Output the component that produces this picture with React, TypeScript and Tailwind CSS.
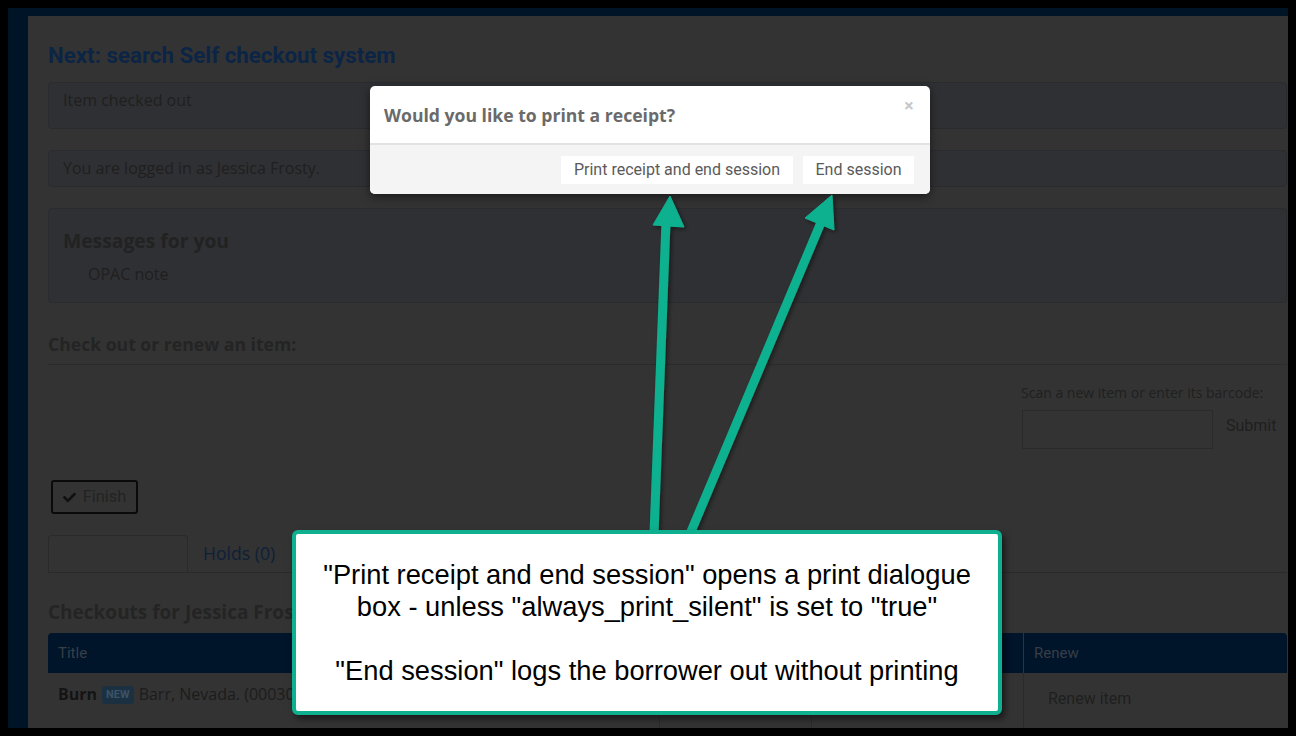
import { FaCheck } from "react-icons/fa";

const openSans = { fontFamily: '"Open Sans", "Noto Sans", sans-serif' };
const roboto = { fontFamily: 'Roboto, "Liberation Sans", sans-serif' };
const arial = { fontFamily: '"Liberation Sans", Arial, sans-serif' };

function Alert({ children, className }: { children: React.ReactNode; className?: string }) {
  return (
    <div className={`rounded-[4px] border border-[#292b2e] bg-[#2f3033] px-[14px] ${className ?? ""}`}>
      {children}
    </div>
  );
}

function ReceiptModal() {
  return (
    <div className="absolute left-[370px] top-[86px] w-[560px] overflow-hidden rounded-[5px] bg-white shadow-[0_3px_10px_rgba(0,0,0,0.5)]">
      <div className="relative flex h-[59px] items-center border-b-2 border-[#e2e2e2] px-[14px]" style={openSans}>
        <span className="mt-[2px] text-[17.6px] font-bold text-[#6a6a6a]">Would you like to print a receipt?</span>
        <span className="absolute right-[16px] top-[10px] text-[18px] font-bold leading-none text-[#c6c6c6]">×</span>
      </div>
      <div className="flex h-[49px] items-center justify-end gap-[10px] bg-[#f4f4f4] pr-[16px]" style={roboto}>
        <span className="flex h-[28px] w-[232px] items-center justify-center bg-white text-[16px] text-[#5a5a5a]">
          Print receipt and end session
        </span>
        <span className="flex h-[28px] w-[111px] items-center justify-center bg-white text-[16px] text-[#5a5a5a]">
          End session
        </span>
      </div>
    </div>
  );
}

function Arrows() {
  return (
    <svg className="absolute inset-0" width="1296" height="736" viewBox="0 0 1296 736">
      <defs>
        <filter id="sh" x="-50%" y="-10%" width="200%" height="120%">
          <feDropShadow dx="2" dy="2" stdDeviation="2" floodColor="#000" floodOpacity="0.45" />
        </filter>
      </defs>
      <g filter="url(#sh)" fill="#0fb08f" stroke="#0fb08f">
        <line x1="654" y1="534" x2="666" y2="222" strokeWidth="9" />
        <polygon points="670,196 653,225 684,227" strokeWidth="1" />
        <line x1="690" y1="534" x2="822" y2="220" strokeWidth="9" />
        <polygon points="832,195 805,218 834,230" strokeWidth="1" />
      </g>
    </svg>
  );
}

function Callout() {
  return (
    <div
      className="absolute left-[292px] top-[530px] flex h-[185px] w-[710px] flex-col items-center justify-center rounded-[6px] border-4 border-[#0fb08f] bg-white text-center text-[27.3px] leading-[32px] text-black shadow-[3px_4px_6px_rgba(0,0,0,0.5)]"
      style={arial}
    >
      <p className="whitespace-nowrap">"Print receipt and end session" opens a print dialogue</p>
      <p className="whitespace-nowrap">box - unless "always_print_silent" is set to "true"</p>
      <p className="h-[32px]" />
      <p className="whitespace-nowrap">"End session" logs the borrower out without printing</p>
    </div>
  );
}

export default function App() {
  return (
    <div className="relative h-[736px] w-[1296px] overflow-hidden bg-black p-2">
      <div className="flex h-[720px] w-[1280px] bg-[#001428] pl-[20px] pt-[8px]">
        <div className="h-full w-[1260px] overflow-hidden bg-[#333333] pl-[20px] pr-px" style={openSans}>
          <h1 className="mt-[25px] text-[22.3px] font-bold leading-[28px] text-[#0c2546]" style={roboto}>
            Next: search Self checkout system
          </h1>

          <Alert className="mt-[13px] h-[47px] pt-[5px]">
            <p className="text-[16px] leading-[24px] text-[#1f1f1f]">Item checked out</p>
          </Alert>

          <Alert className="mt-[21px] h-[37px] pt-[5px]">
            <p className="text-[16px] leading-[24px] text-[#1f1f1f]">You are logged in as Jessica Frosty.</p>
          </Alert>

          <Alert className="mt-[21px] h-[95px] pt-[19px]">
            <h3 className="text-[19.3px] font-bold leading-[26px] text-[#222]">Messages for you</h3>
            <p className="mt-[8px] pl-[25px] text-[16px] leading-[24px] text-[#1f1f1f]">OPAC note</p>
          </Alert>

          <h2 className="mt-[29px] border-b border-[#2b2b2b] pb-[8px] text-[17.6px] font-bold leading-[24px] text-[#242424]">
            Check out or renew an item:
          </h2>

          <div className="ml-[973px] mt-[18px]">
            <p className="text-[14px] leading-[20px] text-[#202020]">Scan a new item or enter its barcode:</p>
            <div className="mt-[7px] flex items-start">
              <div className="ml-px h-[39px] w-[191px] border border-[#2a2a2a]" />
              <span className="ml-[13px] mt-[4px] text-[16px] leading-[24px] text-[#1f1f1f]" style={roboto}>
                Submit
              </span>
            </div>
          </div>

          <button
            className="ml-[3px] mt-[31px] flex h-[34px] w-[87px] items-center justify-center gap-[7px] rounded-[3px] border-2 border-[#0a0a0a] text-[16.4px] text-[#232323]"
            style={roboto}
          >
            <FaCheck size={13} className="text-[#111]" />
            Finish
          </button>

          <div className="mt-[21px] flex h-[38px] border-b border-[#2a2a2a]">
            <div className="h-[38px] w-[140px] rounded-t-[4px] border border-b-0 border-[#2a2a2a]" />
            <div className="flex items-center pl-[15px] text-[17.6px] text-[#0e2038]">Holds (0)</div>
          </div>

          <h2 className="mt-[26px] text-[19px] font-bold leading-[26px] text-[#242424]">Checkouts for Jessica Frosty</h2>

          <div className="mt-[8px] overflow-hidden rounded-t-[4px]">
            <div className="flex h-[40px] bg-[#00142a] text-[15px] text-[#383e47]" style={roboto}>
              <div className="flex w-[611px] items-center pl-[10px]">Title</div>
              <div className="w-[152px] border-l border-[#0a1c30]" />
              <div className="w-[212px] border-l border-[#0a1c30]" />
              <div className="flex flex-1 items-center border-l border-[#2d3440] pl-[10px]">Renew</div>
            </div>
            <div className="flex h-[60px] text-[16px]">
              <div className="flex w-[611px] items-start pl-[10px] pt-[9px] text-[#1c1c1c]">
                <span className="font-bold text-[#141414]">Burn</span>
                <span
                  className="ml-[5px] mt-[4px] rounded-[3px] bg-[#1b3142] px-[4px] text-[11px] font-bold leading-[18px] text-[#3b5267]"
                  style={roboto}
                >
                  NEW
                </span>
                <span className="ml-[5px]">Barr, Nevada. (00030</span>
              </div>
              <div className="w-[152px] border-l border-[#2b2b2b]" />
              <div className="w-[212px] border-l border-[#2b2b2b]" />
              <div className="flex-1 border-l border-[#2b2b2b] pl-[24px] pt-[14px] text-[16px] text-[#1f1f1f]" style={roboto}>
                Renew item
              </div>
            </div>
          </div>
        </div>
      </div>

      <ReceiptModal />
      <Arrows />
      <Callout />
    </div>
  );
}
